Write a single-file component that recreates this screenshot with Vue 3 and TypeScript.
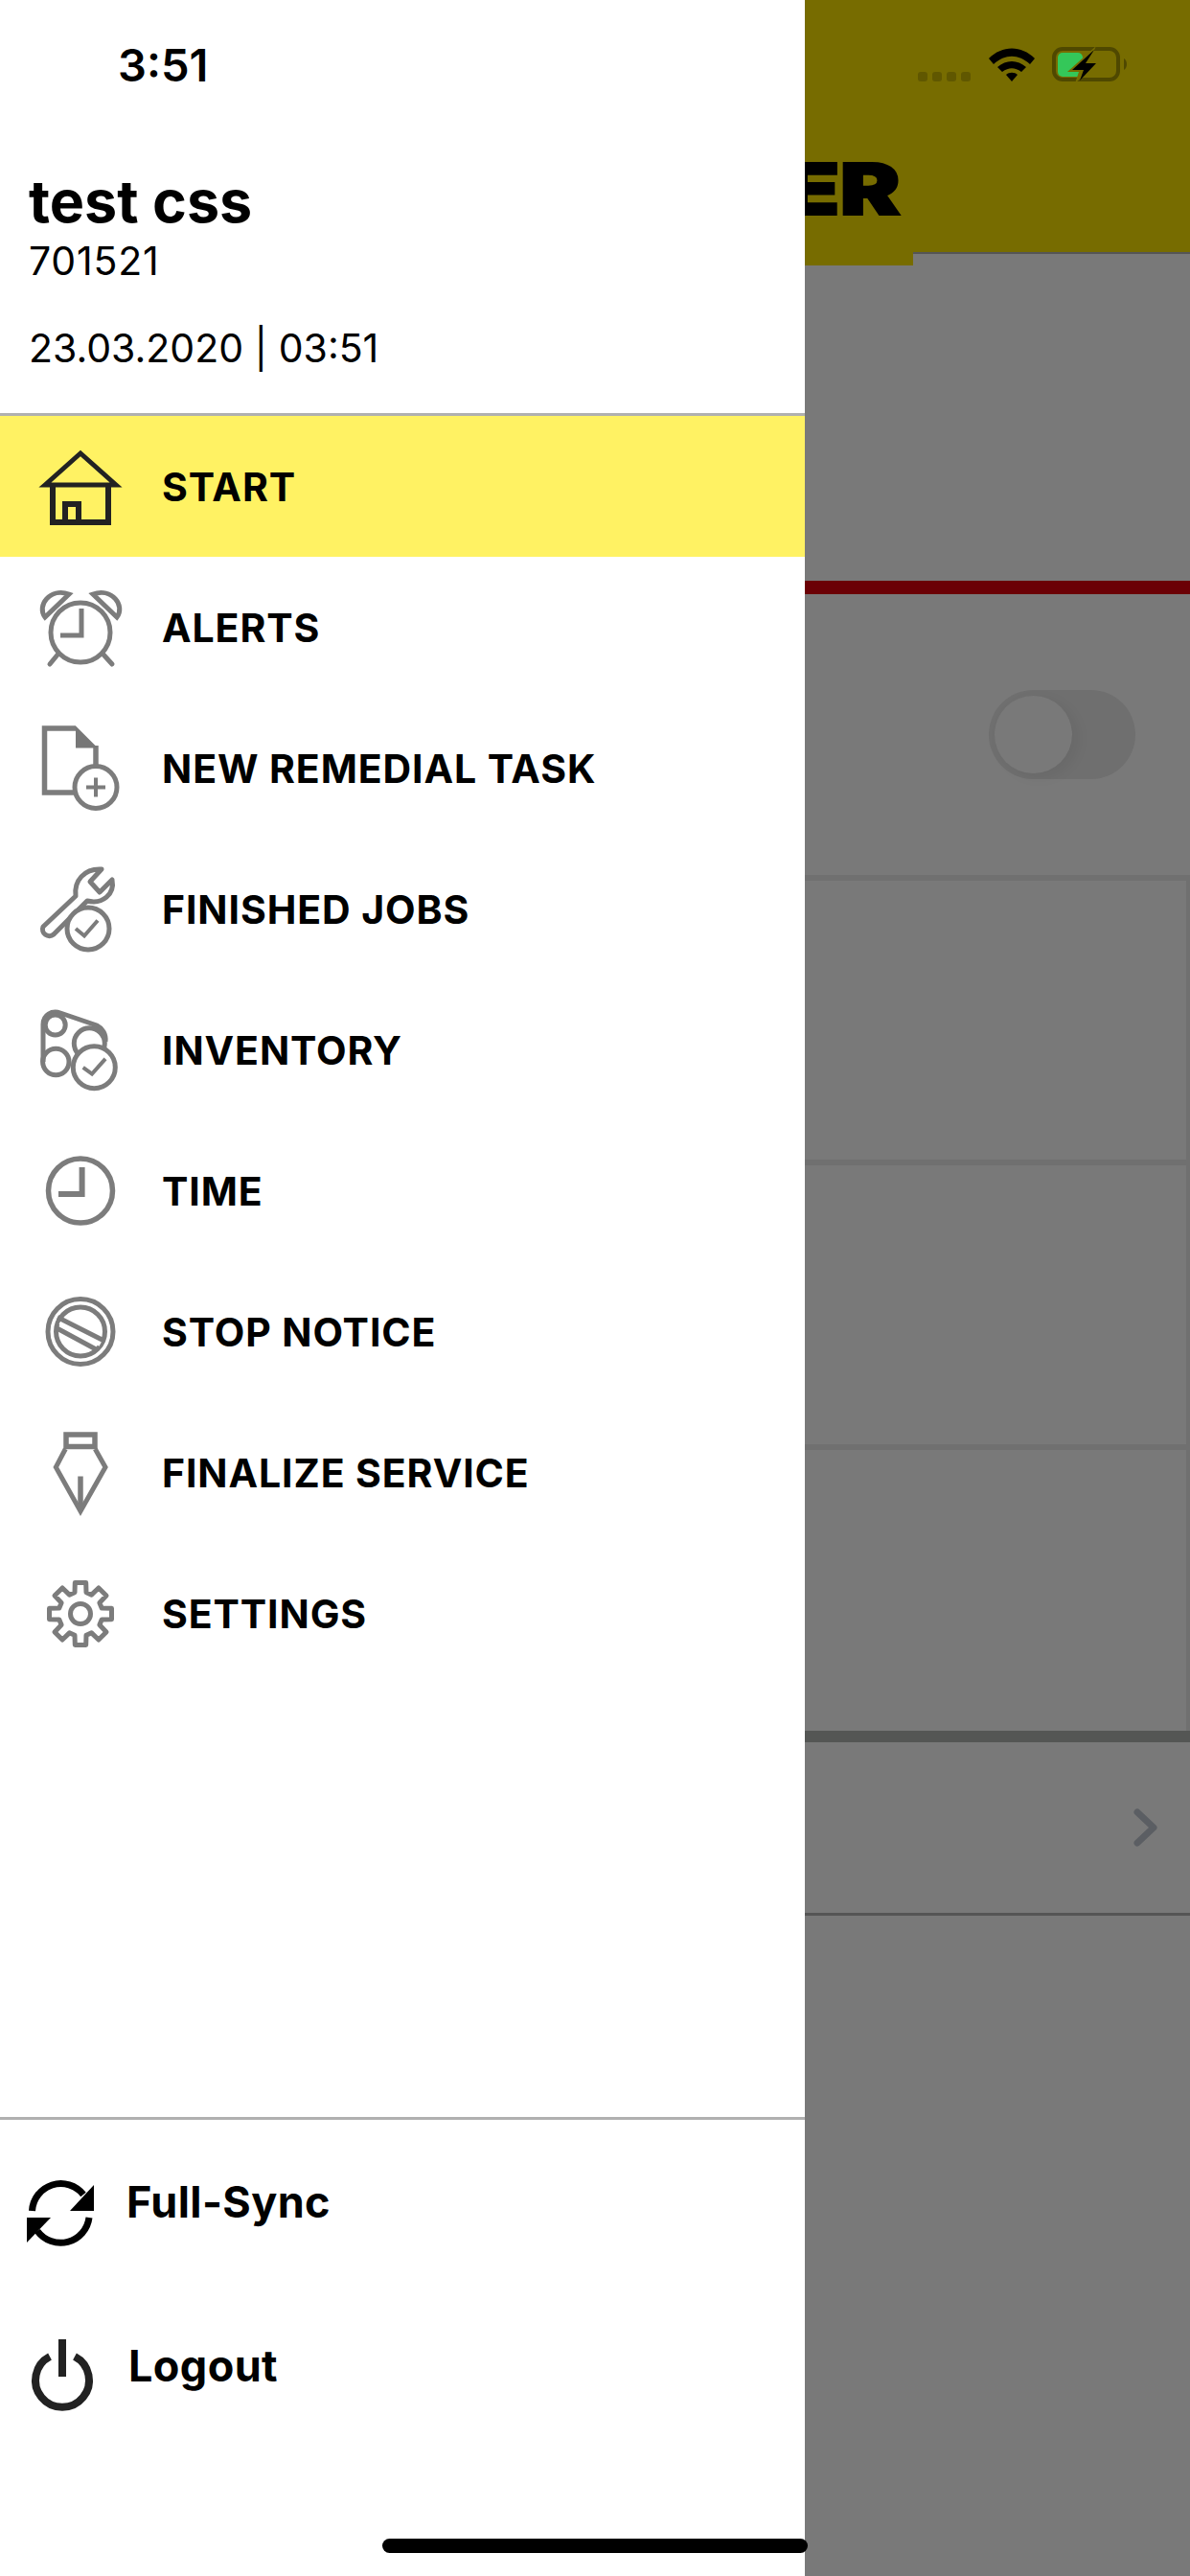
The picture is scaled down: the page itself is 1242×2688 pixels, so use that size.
<script setup lang="ts">
interface NavItem {
  label: string
  icon: string
  active?: boolean
}

const navItems: NavItem[] = [
  { label: 'START', icon: 'home', active: true },
  { label: 'ALERTS', icon: 'alarm' },
  { label: 'NEW REMEDIAL TASK', icon: 'doc' },
  { label: 'FINISHED JOBS', icon: 'wrench' },
  { label: 'INVENTORY', icon: 'belt' },
  { label: 'TIME', icon: 'clock' },
  { label: 'STOP NOTICE', icon: 'stop' },
  { label: 'FINALIZE SERVICE', icon: 'pen' },
  { label: 'SETTINGS', icon: 'gear' }
]

// 8 tooth gear outline around (50, 50)
function buildGear(): string {
  const pts: string[] = []
  const point = (deg: number, r: number) => {
    const a = ((deg - 90) * Math.PI) / 180
    return `${(50 + r * Math.cos(a)).toFixed(1)} ${(50 + r * Math.sin(a)).toFixed(1)}`
  }
  for (let i = 0; i < 8; i++) {
    const c = i * 45
    pts.push(point(c - 15, 23), point(c - 10, 33), point(c + 10, 33), point(c + 15, 23))
  }
  return 'M' + pts.join(' L') + ' Z'
}

const gearPath = buildGear()
const cards = [1, 2, 3]
</script>

<template>
  <div class="screen">
    <aside class="drawer">
      <div class="clock-row">3:51</div>
      <section class="profile">
        <div class="profile-name">test css</div>
        <div class="profile-id">701521</div>
        <div class="profile-date">23.03.2020 | 03:51</div>
      </section>

      <nav class="nav">
        <div
          v-for="item in navItems"
          :key="item.label"
          class="nav-row"
          :class="{ 'is-active': item.active }"
        >
          <svg class="nav-icon" viewBox="0 0 100 100" fill="none" stroke="#7c7c7c" stroke-width="5">
            <template v-if="item.icon === 'home'">
              <g stroke="#222" stroke-width="6">
                <path d="M13 48 L50 15 L87 48 Z" stroke-width="5" />
                <path d="M21 49 V87 H79 V49" />
                <path d="M34 87 V68 H48 V87" />
              </g>
            </template>
            <template v-else-if="item.icon === 'alarm'">
              <circle cx="50" cy="55" r="31" />
              <path d="M51 30 V58 H29" />
              <path d="M13 39 C4 27 18 8 38 15 Z" />
              <path d="M88 39 C97 27 83 8 63 15 Z" />
              <path d="M27 77 L18 88 M73 77 L83 88" stroke-linecap="round" />
            </template>
            <template v-else-if="item.icon === 'doc'">
              <path d="M45 8 H12.5 V75 H44 M66 26 V46" stroke-width="5.5" />
              <path d="M45 5.5 L68 28.5 H45 Z" fill="#777" stroke="none" />
              <circle cx="66" cy="69.5" r="22" fill="#fff" />
              <path d="M56 69.5 H76 M66 59.5 V79.5" stroke-width="4" />
            </template>
            <template v-else-if="item.icon === 'wrench'">
              <path d="M11 68 L45 36 C43 20 54 7 72 8 L60 21 L70 32 L83 19 C86 34 73 45 57 41 L22 76 A7 7 0 0 1 11 68 Z" stroke-linejoin="round" />
              <circle cx="58" cy="70" r="22" fill="#fff" />
              <path d="M45 70 L54 77.5 L68 61.5" stroke-width="4" />
            </template>
            <template v-else-if="item.icon === 'belt'">
              <path d="M11 62 V23 C11 13 20 8 29 11 L67 24 C73 27 77 33 76 41" />
              <circle cx="23.7" cy="23.5" r="10.5" />
              <circle cx="24.3" cy="62" r="13.7" />
              <circle cx="59.3" cy="42.8" r="16" />
              <circle cx="64.3" cy="67.8" r="22" fill="#fff" />
              <path d="M52.7 67.8 L62 74.5 L76 58.8" stroke-width="4" />
            </template>
            <template v-else-if="item.icon === 'clock'">
              <circle cx="50" cy="49.5" r="33.5" stroke-width="5.5" />
              <path d="M51.6 25 V53 H27" stroke-width="6" />
            </template>
            <template v-else-if="item.icon === 'stop'">
              <circle cx="50" cy="49.5" r="34" stroke-width="5" />
              <circle cx="50" cy="49.5" r="25.5" />
              <path d="M29 39 L71 62" stroke="#fff" stroke-width="6" />
              <path d="M26 34.5 L74.5 59 M24.5 45.5 L68 69" />
            </template>
            <template v-else-if="item.icon === 'pen'">
              <path d="M35 10 H65 V22.5 H35 Z" stroke-width="5.5" />
              <path d="M34.3 25 L24.3 44 L50 90 L76 44 L65.3 25" stroke-width="5" />
              <path d="M50 53.5 V90" stroke-width="5.5" />
            </template>
            <template v-else>
              <path :d="gearPath" stroke-linejoin="round" />
              <circle cx="50" cy="50" r="10.5" />
            </template>
          </svg>
          <span class="nav-label">{{ item.label }}</span>
        </div>
      </nav>

      <footer class="drawer-footer">
        <div class="foot-row sync-row">
          <svg class="foot-icon" viewBox="0 0 80 80" fill="none" stroke="#000" stroke-width="7">
            <path d="M9.5 37 A30 30 0 0 1 63 20" />
            <path d="M74 10 V37 H49 Z" fill="#000" stroke="none" />
            <path d="M69 44 A30 30 0 0 1 15 58" />
            <path d="M4 70 V44 H29 Z" fill="#000" stroke="none" />
          </svg>
          <span class="foot-label">Full-Sync</span>
        </div>
        <div class="foot-row logout-row">
          <svg class="foot-icon" viewBox="0 0 80 80" fill="none" stroke="#222" stroke-width="8">
            <path d="M28 23 A28 28 0 1 0 54 23" />
            <path d="M41 5 V44" />
          </svg>
          <span class="foot-label">Logout</span>
        </div>
      </footer>
    </aside>

    <main class="backdrop">
      <header class="top-bar">
        <div class="brand-tab"><span class="brand-text">ER</span></div>
        <div class="status-icons">
          <div class="signal-dots">
            <i v-for="n in 4" :key="n" class="signal-dot"></i>
          </div>
          <svg class="wifi" viewBox="0 0 48 36">
            <path d="M0 12 C14 -2 34 -2 48 12 L43 18 C31 7 17 7 5 18 Z" fill="#000" />
            <path d="M9 21 C18 13 30 13 39 21 L34 26 C27 21 21 21 14 26 Z" fill="#000" />
            <path d="M18 29 C21 26 27 26 30 29 L24 36 Z" fill="#000" />
          </svg>
          <svg class="battery" viewBox="0 0 80 36">
            <rect x="2" y="2" width="67" height="32" rx="9" fill="none" stroke="#4f4800" stroke-width="4" />
            <path d="M75 12 C79 14 79 22 75 24 Z" fill="#4f4800" />
            <rect x="6" y="6" width="26" height="25" rx="5" fill="#34c759" />
            <path d="M46 -1 L16 26 H28 L24 38 L50 14 H39 Z" fill="#776c00" />
            <path d="M44 3 L21 24 H33 L29 35 L46 17 H35 Z" fill="#000" />
          </svg>
        </div>
      </header>

      <div class="red-band"></div>

      <div class="toggle-row">
        <div class="toggle"><div class="toggle-knob"></div></div>
      </div>

      <div class="bg-cards">
        <div v-for="c in cards" :key="c" class="bg-card"></div>
      </div>

      <div class="link-row">
        <svg class="chevron" viewBox="0 0 26 40" fill="none" stroke="#5b5e63" stroke-width="7" stroke-linecap="round" stroke-linejoin="round">
          <path d="M4 4 L21 20 L4 36" />
        </svg>
      </div>
    </main>

    <div class="home-indicator"></div>
  </div>
</template>

<style>
html,
body {
  margin: 0;
  background: #797979;
}
</style>

<style scoped>
.screen {
  position: relative;
  display: flex;
  width: 1242px;
  height: 2688px;
  overflow: hidden;
  font-family: Inter, "Liberation Sans", sans-serif;
  color: #000;
}

.drawer {
  display: flex;
  flex-direction: column;
  flex: none;
  width: 840px;
  height: 100%;
  background: #fff;
}

.clock-row {
  height: 136px;
  padding: 43px 0 0 123px;
  box-sizing: border-box;
  font-size: 47px;
  font-weight: 600;
  line-height: 50px;
}

.profile {
  height: 298px;
  padding-left: 30px;
  box-sizing: border-box;
  border-bottom: 3px solid #b0b0b0;
}

.profile-name {
  margin-top: 38px;
  font-size: 61px;
  font-weight: 700;
  line-height: 72px;
}

.profile-id {
  margin-top: 2px;
  font-size: 41px;
  line-height: 48px;
  letter-spacing: 0.8px;
}

.profile-date {
  margin-top: 43px;
  font-size: 41px;
  line-height: 48px;
}

.nav {
  flex: 1;
}

.nav-row {
  display: flex;
  align-items: center;
  gap: 35px;
  height: 147px;
  padding-left: 34px;
}

.nav-row.is-active {
  background: #fff263;
}

.nav-icon {
  flex: none;
  width: 100px;
  height: 100px;
}

.nav-label {
  font-size: 41px;
  font-weight: 700;
  line-height: 48px;
  letter-spacing: 0.9px;
}

.drawer-footer {
  height: 479px;
  box-sizing: border-box;
  border-top: 3px solid #b0b0b0;
}

.foot-row {
  display: flex;
  align-items: flex-start;
  padding-left: 24px;
}

.sync-row {
  gap: 28px;
  height: 171px;
  padding-top: 58px;
  box-sizing: border-box;
}

.logout-row {
  gap: 30px;
  height: 170px;
  padding-top: 53px;
  box-sizing: border-box;
}

.foot-icon {
  flex: none;
  width: 80px;
  height: 80px;
}

.foot-label {
  font-size: 45px;
  font-weight: 700;
  line-height: 54px;
  letter-spacing: 0.4px;
}

.sync-row .foot-label {
  margin-top: 1px;
}

.logout-row .foot-label {
  margin-top: 6px;
}

.backdrop {
  flex: 1;
  min-width: 0;
  overflow: hidden;
  background: #797979;
}

.top-bar {
  position: relative;
  height: 265px;
  box-sizing: border-box;
  background: #776c00;
  border-bottom: 2px solid #555;
}

.brand-tab {
  position: absolute;
  top: 0;
  left: 0;
  display: flex;
  justify-content: flex-end;
  align-items: flex-start;
  width: 113px;
  height: 277px;
  padding: 163px 13px 0 0;
  box-sizing: border-box;
  background: #776c00;
}

.brand-text {
  font-size: 74px;
  font-weight: 900;
  line-height: 68px;
  white-space: nowrap;
  transform: scaleX(1.28);
  transform-origin: right center;
  -webkit-text-stroke: 2px #000;
}

.status-icons {
  position: absolute;
  top: 49px;
  left: 118px;
  display: flex;
  align-items: flex-end;
}

.signal-dots {
  display: flex;
  gap: 5px;
  margin-right: 19px;
}

.signal-dot {
  width: 10px;
  height: 10px;
  border-radius: 3px;
  background: #605700;
}

.wifi {
  width: 48px;
  height: 36px;
  margin-right: 18px;
}

.battery {
  width: 80px;
  height: 36px;
}

.red-band {
  height: 14px;
  margin-top: 341px;
  background: #6b0005;
}

.toggle-row {
  display: flex;
  justify-content: flex-end;
  align-items: center;
  height: 293px;
  padding-right: 57px;
  box-sizing: border-box;
}

.toggle {
  width: 153px;
  height: 93px;
  padding: 6px;
  box-sizing: border-box;
  border-radius: 47px;
  background: #6f6f6f;
}

.toggle-knob {
  width: 81px;
  height: 81px;
  border-radius: 50%;
  background: #797979;
  box-shadow: 6px 4px 14px rgba(0, 0, 0, 0.06);
}

.bg-card {
  height: 291px;
  border-top: 6px solid #707070;
  border-right: 4px solid #707070;
}

.bg-card:last-child {
  height: 293px;
}

.link-row {
  display: flex;
  justify-content: flex-end;
  align-items: center;
  height: 193px;
  padding-right: 33px;
  box-sizing: border-box;
  border-top: 12px solid #545654;
  border-bottom: 3px solid #555;
}

.chevron {
  width: 26px;
  height: 40px;
}

.home-indicator {
  position: absolute;
  left: 399px;
  top: 2649px;
  width: 444px;
  height: 15px;
  border-radius: 8px;
  background: #000;
}
</style>
